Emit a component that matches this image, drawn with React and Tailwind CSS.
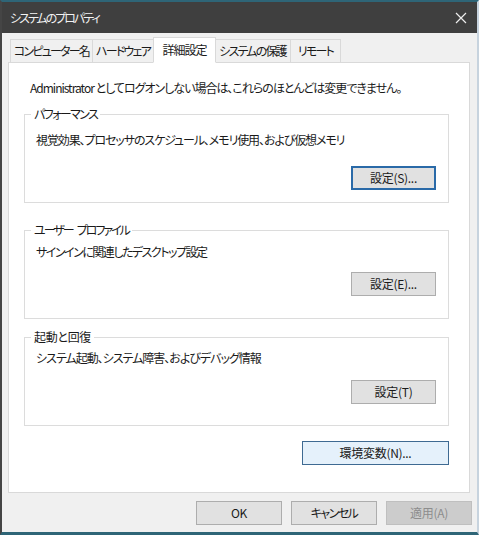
import React from 'react';

const FONT = { fontFamily: '"Noto Sans CJK JP", "Noto Sans", sans-serif' };

const TABS = [
  { t: 'コンピューター名', w: 'w-[83px]' },
  { t: 'ハードウェア', w: 'w-[62px]' },
  { t: '詳細設定', w: 'w-[63px]', active: true },
  { t: 'システムの保護', w: 'w-[77px]' },
  { t: 'リモート', w: 'w-[51px]' },
];

const Btn = ({ children, variant = 'normal', className = '' }) => {
  const look = {
    normal: 'bg-[#e1e1e1] border border-[#adadad] text-[#1a1a1a]',
    focus: 'bg-[#e1e1e1] border-2 border-[#2a6aa8] text-[#1a1a1a]',
    hover: 'bg-[#e5f1fb] border border-[#3e6a92] text-[#1a1a1a]',
    disabled: 'bg-[#cccccc] border border-[#bfbfbf] text-[#8d8d8d]',
  }[variant];
  return (
    <div className={`flex items-center justify-center h-[24px] text-[12px] leading-none ${look} ${className}`}>
      {children}
    </div>
  );
};

const Group = ({ label, labelTrack, desc, descTrack, button, pad, gap, className = '' }) => (
  <div className={`relative border border-[#dcdcdc] pl-[11px] pr-[12px] ${pad} ${className}`}>
    <span className={`absolute -top-[9px] left-[6px] bg-white px-[3px] text-[12px] leading-[16px] text-[#1a1a1a] whitespace-pre ${labelTrack}`}>{label}</span>
    <p className={`text-[12px] leading-[16px] text-[#1a1a1a] ${descTrack}`}>{desc}</p>
    <div className={`flex justify-end ${gap}`}>{button}</div>
  </div>
);

export default function App() {
  return (
    <div style={FONT} className="w-[479px] h-[535px] flex flex-col bg-[#f0f0f0] [font-feature-settings:'palt'] tracking-[-0.3px] border-t-[2px] border-t-[#2e6577] border-l-[2px] border-l-[#454545] border-r-[2px] border-r-[#c7d3de] border-b-[3px] border-b-[#2e6577]">
      {/* Title bar */}
      <div className="h-[31px] shrink-0 bg-[#3f3f3f] flex items-center justify-between pl-[8px] pr-[8px]">
        <span className="text-[12px] text-[#f2f2f2] tracking-[-2px]">システムのプロパティ</span>
        <svg width="12" height="12" viewBox="0 0 12 12" className="mr-[2px]">
          <path d="M1 1L11 11M11 1L1 11" stroke="#eeeeee" strokeWidth="1.2" />
        </svg>
      </div>

      {/* Tabs */}
      <div className="flex items-end pl-[8px] pt-[3px] h-[29px] shrink-0">
        {TABS.map(({ t, w, active }) =>
          active ? (
            <div key={t} className={`relative z-10 -mb-px -mx-[1px] h-[26px] ${w} flex items-center justify-center bg-white border border-[#d9d9d9] border-b-white text-[12px] text-[#1a1a1a] tracking-[-1px]`}>
              {t}
            </div>
          ) : (
            <div key={t} className={`h-[23px] ${w} flex items-center justify-center bg-[#f0f0f0] border border-[#d9d9d9] border-b-0 -ml-px first:ml-0 text-[12px] text-[#1a1a1a] tracking-[-1.8px]`}>
              {t}
            </div>
          )
        )}
      </div>

      {/* Panel */}
      <div className="ml-[6px] mr-[7px] h-[431px] shrink-0 bg-white border border-[#d9d9d9] pt-[17px] pl-[15px] pr-[20px]">
        <p className="text-[12px] leading-[16px] text-[#1a1a1a] pl-[6px] whitespace-nowrap tracking-[-1px]">
          Administrator としてログオンしない場合は、これらのほとんどは変更できません。
        </p>

        <Group
          className="mt-[18px]"
          label="パフォーマンス"
          labelTrack="tracking-[-1.6px]"
          desc="視覚効果、プロセッサのスケジュール、メモリ使用、および仮想メモリ"
          descTrack="tracking-[-1.1px]"
          pad="pt-[17px] pb-[12px]"
          gap="mt-[18px]"
          button={<Btn variant="focus" className="w-[85px]">設定(S)...</Btn>}
        />
        <Group
          className="mt-[27px]"
          label={'ユーザー\u2002プロファイル'}
          labelTrack="tracking-[-2px]"
          desc="サインインに関連したデスクトップ設定"
          descTrack="tracking-[-1.5px]"
          pad="pt-[13px] pb-[22px]"
          gap="mt-[12px]"
          button={<Btn className="w-[85px]">設定(E)...</Btn>}
        />
        <Group
          className="mt-[18px]"
          label="起動と回復"
          labelTrack=""
          desc="システム起動、システム障害、およびデバッグ情報"
          descTrack="tracking-[-1px]"
          pad="pt-[12px] pb-[21px]"
          gap="mt-[14px]"
          button={<Btn className="w-[85px]">設定(T)</Btn>}
        />

        <div className="flex justify-end mt-[15px]">
          <Btn variant="hover" className="w-[147px]">環境変数(N)...</Btn>
        </div>
      </div>

      {/* Footer */}
      <div className="flex justify-end gap-[9px] pr-[5px] pt-[8px]">
        <Btn className="w-[86px]">OK</Btn>
        <Btn className="w-[86px] tracking-[-1.5px]">キャンセル</Btn>
        <Btn variant="disabled" className="w-[86px]">適用(A)</Btn>
      </div>
    </div>
  );
}
